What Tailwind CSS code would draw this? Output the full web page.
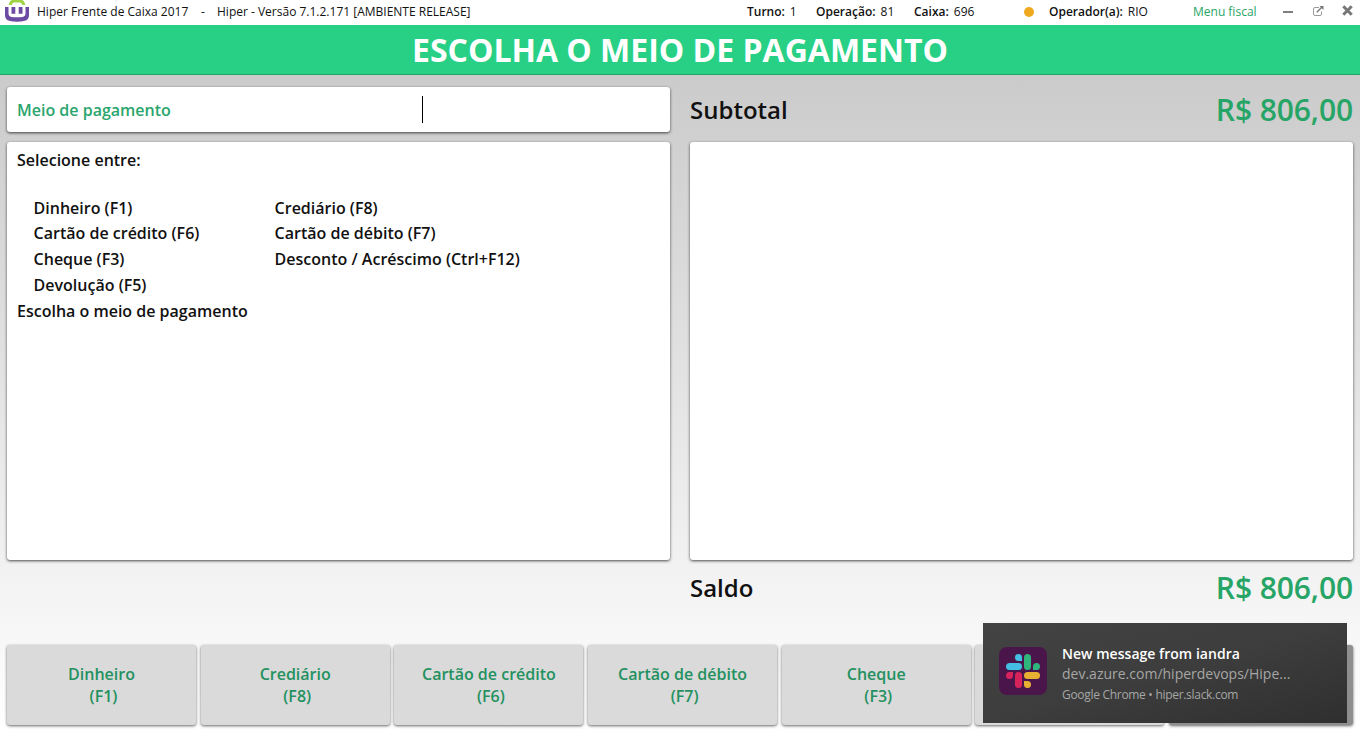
<!DOCTYPE html>
<html lang="pt-BR">
<head>
<meta charset="utf-8">
<title>Hiper Frente de Caixa</title>
<script src="https://cdn.jsdelivr.net/npm/@tailwindcss/browser@4"></script>
</head>
<body class="relative flex h-[732px] w-[1360px] flex-col overflow-hidden bg-white font-['Open_Sans',sans-serif] text-[#111]">
<header class="flex h-[25px] shrink-0 items-center pb-[2px] text-[12px] leading-[23px] whitespace-nowrap">
  <svg class="ml-1 h-[25px] w-[26px] shrink-0 translate-y-px" viewBox="0 0 26 25" fill="none">
    <path d="M6.300 5V4.500Q7 1.200 10 1H16Q19 1.200 19.700 4.500V5" stroke="#9fd444" stroke-width="3"/>
    <path d="M1 7H4.500V13.500Q4.500 16.500 7.500 16.900Q13 17.600 18.500 16.900Q21.500 16.500 21.500 13.500V7H25V15Q25 19.700 21 20.800Q13 22.500 5 20.800Q1 19.700 1 15Z" fill="#6d4ba3"/>
    <path d="M7.500 7H11.300V13.800H7.500ZM14.700 7H18.500V13.800H14.700Z" fill="#6d4ba3"/>
  </svg>
  <span class="ml-[7px] w-[164px]">Hiper Frente de Caixa 2017</span>
  <span class="w-4">-</span>
  <span class="w-[530px]">Hiper - Versão 7.1.2.171 [AMBIENTE RELEASE]</span>
  <span class="w-[69px]"><b class="font-semibold">Turno:</b><span class="ml-[5px]">1</span></span>
  <span class="w-[98px]"><b class="font-semibold">Operação:</b><span class="ml-[5px]">81</span></span>
  <span class="w-[110px]"><b class="font-semibold">Caixa:</b><span class="ml-[5px]">696</span></span>
  <i class="mr-[15px] size-[10px] shrink-0 rounded-full bg-[#f0a91f]"></i>
  <span class="w-[144px]"><b class="font-semibold">Operador(a):</b><span class="ml-[5px]">RIO</span></span>
  <span class="w-[90px] text-[#27a567]">Menu fiscal</span>
  <i class="h-[2px] w-[10px] shrink-0 bg-[#808080]"></i>
  <svg class="ml-5 h-[10px] w-[11px] shrink-0 -translate-y-px" viewBox="0 0 11 10" fill="none" stroke="#999"><path d="M6 1.500H2Q.5 1.500.5 3V8Q.5 9.500 2 9.500H7Q8.500 9.500 8.500 8V5.500"/><path d="M3.800 6.200L9 1" stroke="#777" stroke-width="1.300"/><path d="M6.500 0H10.500V4Z" fill="#777" stroke="none"/></svg>
  <svg class="ml-[18px] size-[11px] shrink-0 -translate-y-px" viewBox="0 0 11 11" stroke="#777" stroke-width="3"><path d="M1.300 1.300L9.700 9.700M9.700 1.300L1.300 9.700"/></svg>
</header>
<div class="flex h-[50px] shrink-0 items-center justify-center border-b border-[#24a268] bg-[#28d085] text-[32px] font-bold text-white"><h1 class="whitespace-nowrap">ESCOLHA O MEIO DE PAGAMENTO</h1></div>
<main class="flex min-h-0 flex-1 flex-col bg-linear-to-b from-[#cbcbcb] to-white px-[7px] pt-3">
  <div class="grid grid-cols-2 gap-x-5">
    <section>
      <div class="flex h-[45px] items-center rounded-[3px] bg-white px-[10px] text-[16px] font-semibold text-[#2aa56d] shadow-[0_1px_3px_rgba(0,0,0,.7)]">
        <span class="w-[405px]">Meio de pagamento</span><i class="h-[27px] w-px bg-black"></i>
      </div>
      <div class="mt-[10px] h-[418px] rounded-[3px] bg-white px-[10px] pt-[6px] text-[16px] leading-[25.7px] font-semibold shadow-[0_1px_3px_rgba(0,0,0,.7)]">
        <p>Selecione entre:</p>
        <div class="mt-[22px] grid grid-cols-[241px_1fr] pl-[16.6px]">
          <p>Dinheiro (F1)</p><p>Crediário (F8)</p>
          <p>Cartão de crédito (F6)</p><p>Cartão de débito (F7)</p>
          <p>Cheque (F3)</p><p>Desconto / Acréscimo (Ctrl+F12)</p>
          <p>Devolução (F5)</p>
        </div>
        <p>Escolha o meio de pagamento</p>
      </div>
    </section>
    <section>
      <div class="flex h-[45px] items-center justify-between"><span class="text-[24px] font-semibold">Subtotal</span><span class="text-[30px] font-semibold tracking-[-0.1px] text-[#27a567]">R$ 806,00</span></div>
      <div class="mt-[10px] h-[418px] rounded-[3px] bg-white shadow-[0_1px_3px_rgba(0,0,0,.7)]"></div>
      <div class="mt-[5px] flex h-[45px] items-center justify-between"><span class="text-[24px] font-semibold">Saldo</span><span class="text-[30px] font-semibold tracking-[-0.1px] text-[#27a567]">R$ 806,00</span></div>
    </section>
  </div>
  <div class="mt-[35px] grid h-20 grid-cols-[repeat(6,189px)_1fr] gap-x-[4.700px] text-center text-[16px] leading-[22px] font-semibold text-[#239160] *:rounded-[3px] *:bg-[#dadada] *:pt-[18px] *:shadow-[0_1px_3px_rgba(0,0,0,.6)]">
    <div>Dinheiro<br><span class="ml-1">(F1)</span></div>
    <div>Crediário<br><span class="ml-1">(F8)</span></div>
    <div>Cartão de crédito<br><span class="ml-1">(F6)</span></div>
    <div>Cartão de débito<br><span class="ml-1">(F7)</span></div>
    <div>Cheque<br><span class="ml-1">(F3)</span></div>
    <div></div>
    <div class="bg-[#8e8e8e]!"></div>
  </div>
</main>
<aside class="absolute top-[623px] left-[983px] flex h-[100px] w-[364px] bg-linear-to-br from-[#424342] via-[#3c3d3c] to-[#2f2f2f] pt-6 pl-4">
  <svg class="size-12 shrink-0" viewBox="0 0 48 48">
    <rect width="48" height="48" rx="8" fill="#4a154b"/>
    <g fill="#43bfe3"><rect x="7" y="16" width="16" height="7" rx="3.500"/><path d="M23 14V10.500A3.500 3.500 0 1 0 19.500 14Z"/></g>
    <g fill="#2fb67c"><rect x="25" y="7" width="7" height="16" rx="3.500"/><path d="M34 23H37.500A3.500 3.500 0 1 0 34 19.500Z"/></g>
    <g fill="#e8b033"><rect x="25" y="25" width="16" height="7" rx="3.500"/><path d="M25 34V37.500A3.500 3.500 0 1 0 28.500 34Z"/></g>
    <g fill="#d6235b"><rect x="16" y="25" width="7" height="16" rx="3.500"/><path d="M14 25H10.500A3.500 3.500 0 1 0 14 28.500Z"/></g>
  </svg>
  <div class="ml-[15px] -mt-[3px] whitespace-nowrap text-[#a6a6a6]">
    <p class="text-[14px] leading-5 font-semibold tracking-[0.03px] text-white">New message from iandra</p>
    <p class="text-[14px] leading-5">dev.azure.com/hiperdevops/Hipe...</p>
    <p class="text-[12px] leading-[22px] tracking-[-0.3px]">Google Chrome • hiper.slack.com</p>
  </div>
</aside>
</body>
</html>
